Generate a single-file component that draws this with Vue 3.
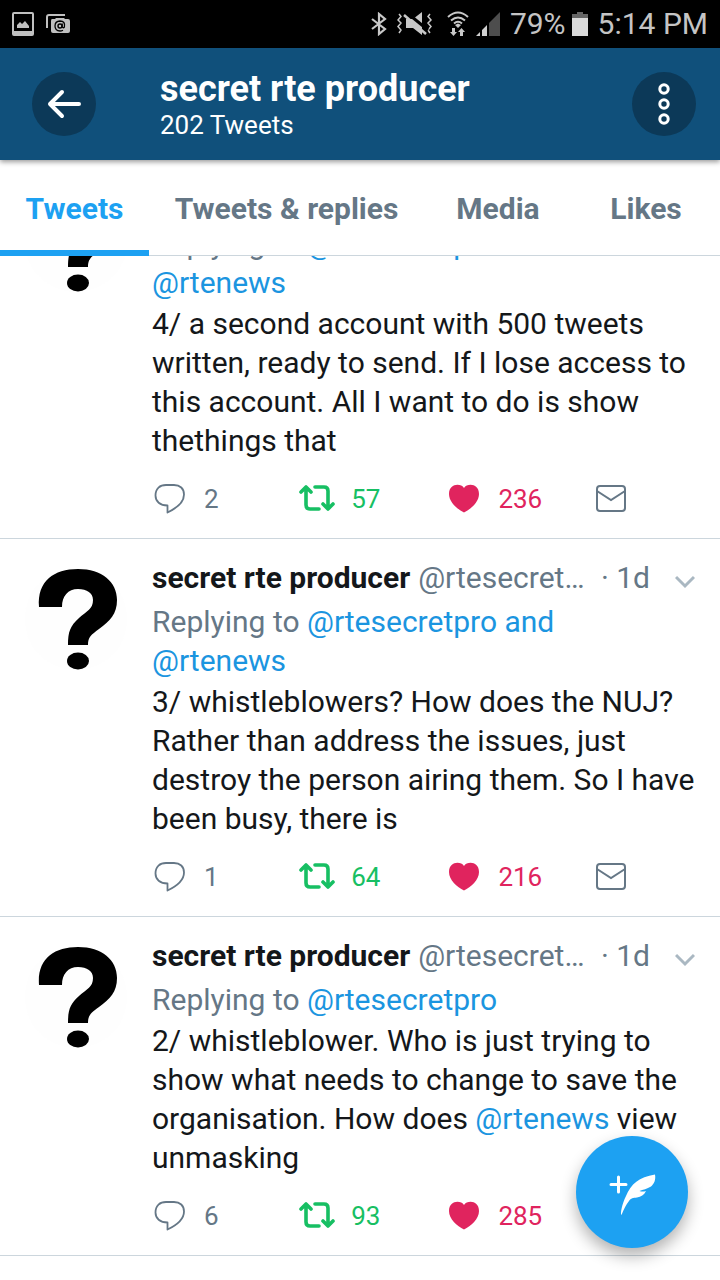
<script setup>
import { ref } from 'vue'

const tabs = ['Tweets', 'Tweets & replies', 'Media', 'Likes']
const active = ref('Tweets')

const tweets = [
  {
    id: 4,
    replying: ['@rtesecretpro and', '@rtenews'],
    text: [{ t: '4/ a second account with 500 tweets written, ready to send. If I lose access to this account. All I want to do is show thethings that' }],
    replies: 2,
    retweets: 57,
    likes: 236,
  },
  {
    id: 3,
    replying: ['@rtesecretpro and', '@rtenews'],
    text: [{ t: '3/ whistleblowers? How does the NUJ? Rather than address the issues, just destroy the person airing them. So I have been busy, there is' }],
    replies: 1,
    retweets: 64,
    likes: 216,
  },
  {
    id: 2,
    replying: ['@rtesecretpro'],
    text: [
      { t: '2/ whistleblower. Who is just trying to show what needs to change to save the organisation. How does ' },
      { t: '@rtenews', link: true },
      { t: ' view unmasking' },
    ],
    replies: 6,
    retweets: 93,
    likes: 285,
  },
]
</script>

<template>
  <div class="screen">
    <div class="status">
      <div class="status-side">
        <svg width="22" height="24" viewBox="0 0 22 24">
          <rect x="1" y="1" width="20" height="22" rx="1" fill="none" stroke="#c0c0c0" stroke-width="2" />
          <path d="M1 19h20v4H1z" fill="#c0c0c0" />
          <path d="M5 16v-3l3-3 2 2 3-3 4 5v2z" fill="#c0c0c0" />
        </svg>
        <svg width="24" height="20" viewBox="0 0 24 20">
          <path d="M1 14V3q0-2 2-2h16" fill="none" stroke="#c0c0c0" stroke-width="2" />
          <path d="M6 5h3l1-1h8l1 1h3q2 0 2 2v10q0 2-2 2H7q-2 0-2-2V7q0-2 1-2z" fill="#c0c0c0" />
          <circle cx="14" cy="12" r="2" fill="none" stroke="#000" stroke-width="1.4" />
          <path d="M16.200 9.500v3.500q1 1.500 2.200 0Q19.500 7 14 7q-5 .3-5 5t5 5q1.500 0 3-.8" fill="none" stroke="#000" stroke-width="1.300" />
        </svg>
      </div>
      <div class="status-side right">
        <svg width="16" height="24" viewBox="0 0 16 24">
          <path d="M1 7l13 10-6 5V2l6 5L1 17" fill="none" stroke="#c8c8c8" stroke-width="2.200" />
        </svg>
        <svg class="mute" width="36" height="24" viewBox="0 0 36 24">
          <path d="M2 2l2 2.500L1 8l3 3-3 3.500L4 18l-2 3M33 2l-2 2.500L34 8l-3 3 3 3.500L31 18l2 3" fill="none" stroke="#c8c8c8" stroke-width="1.500" />
          <path d="M9 7h7l9-7v23l-9-7H9z" fill="#c8c8c8" />
          <path d="M9 0l22 18" stroke="#000" stroke-width="3" />
          <path d="M7 3l22 19" stroke="#c8c8c8" stroke-width="2.500" />
        </svg>
        <svg class="wifi" width="22" height="26" viewBox="0 0 22 26">
          <path d="M1 6Q11-3 21 6M4 9.500q7-6 14 0M7 12.500q4-3.500 8 0" fill="none" stroke="#c8c8c8" stroke-width="2" />
          <path d="M8 14l3-1.500 3 1.500-3 3z" fill="#c8c8c8" />
          <path d="M5 17h3v4h2l-3.500 4L3 21h2zM13 25v-4h-2l3.500-4 3.500 4h-2v4z" fill="#c8c8c8" />
        </svg>
        <svg class="signal" width="24" height="24" viewBox="0 0 24 24">
          <path d="M13 11L24 0v24H13z" fill="#4d4d4d" />
          <path d="M0 24l4-4v4zM6 18l5-5v11H6z" fill="#d0d0d0" />
        </svg>
        <span class="percent">79%</span>
        <svg class="battery" width="16" height="24" viewBox="0 0 16 24">
          <path d="M0 2h5V0h6v2h5v4H0z" fill="#666" />
          <path d="M0 6h16v18H0z" fill="#dadada" />
        </svg>
        <span>5:14 PM</span>
      </div>
    </div>

    <header class="bar">
      <button class="round" aria-label="Back">
        <svg width="36" height="30" viewBox="0 0 36 30">
          <path d="M33 15H4M16 3L4 15l12 12" fill="none" stroke="#fff" stroke-width="4" stroke-linecap="round" stroke-linejoin="round" />
        </svg>
      </button>
      <div class="heading">
        <h1>secret rte producer</h1>
        <p>202 Tweets</p>
      </div>
      <button class="round" aria-label="More options">
        <svg width="12" height="42" viewBox="0 0 12 42">
          <g fill="none" stroke="#fff" stroke-width="3">
            <circle cx="6" cy="6" r="4.200" />
            <circle cx="6" cy="21" r="4.200" />
            <circle cx="6" cy="36" r="4.200" />
          </g>
        </svg>
      </button>
    </header>

    <nav class="tabs">
      <button v-for="t in tabs" :key="t" :class="{ on: t === active }" @click="active = t">{{ t }}</button>
    </nav>

    <main class="viewport">
      <div class="feed">
        <article v-for="w in tweets" :key="w.id" class="tweet">
          <svg class="avatar" width="104" height="108" viewBox="0 0 104 108">
            <circle cx="52" cy="55" r="51" fill="#fefefe" />
            <path d="M15 43C13 17 30 5 54 5C78 5 93 18 93 36C93 50 86 57 75 65C67 71 64 73 64 81H44C44 68 46 62 55 54C63 47 69 45 69 36C69 29 63 25 54 25C44 25 38 32 38 43Z" />
            <ellipse cx="54" cy="97" rx="11" ry="8.500" />
          </svg>
          <div class="content">
            <div class="who">
              <strong>secret rte producer</strong>
              <span class="handle">@rtesecret…</span>
              <span class="age">· 1d</span>
              <button class="caret" aria-label="Tweet options">
                <svg width="20" height="14" viewBox="0 0 20 14">
                  <path d="M1 2l9 9 9-9" fill="none" stroke="#aab8c2" stroke-width="3" />
                </svg>
              </button>
            </div>
            <div class="replying">
              Replying to
              <template v-for="(r, i) in w.replying" :key="r"><br v-if="i" /><a href="#">{{ r }}</a></template>
            </div>
            <p class="text"><template v-for="(s, i) in w.text" :key="i"><a v-if="s.link" href="#">{{ s.t }}</a><template v-else>{{ s.t }}</template></template></p>
            <div class="actions">
              <button class="reply" aria-label="Reply">
                <svg width="36" height="32" viewBox="0 0 36 32">
                  <path d="M15.500 22.500C8 22.500 3.500 18.500 3.500 12.500C3.500 5.500 8 2 14 2h8C28 2 32 5.500 32 11.500C32 20 24 25.500 15.500 29.500V22.500Z" fill="none" stroke="#657786" stroke-width="1.800" stroke-linejoin="round" />
                </svg>
                <span>{{ w.replies }}</span>
              </button>
              <button class="retweet" aria-label="Retweet">
                <svg width="36" height="32" viewBox="0 0 36 32">
                  <path d="M2 9l5-5 5 5M7 5v17q0 4 4 4h9M16 4h9q4 0 4 4v17M24 21l5 5 5-5" fill="none" stroke="#17bf63" stroke-width="3.600" stroke-linecap="round" stroke-linejoin="round" />
                </svg>
                <span>{{ w.retweets }}</span>
              </button>
              <button class="like" aria-label="Like">
                <svg width="36" height="32" viewBox="0 0 36 32">
                  <path d="M18 5C21 0 33 0 33 11C33 19 25 26 18 29.500C11 26 3 19 3 11C3 0 15 0 18 5Z" fill="#e0245e" />
                </svg>
                <span>{{ w.likes }}</span>
              </button>
              <button class="mail" aria-label="Send message">
                <svg width="36" height="32" viewBox="0 0 36 32">
                  <rect x="3" y="3" width="28" height="25" rx="3" fill="none" stroke="#657786" stroke-width="2" />
                  <path d="M3 8l14 9 14-9" fill="none" stroke="#657786" stroke-width="2" />
                </svg>
              </button>
            </div>
          </div>
        </article>
      </div>
    </main>

    <button class="compose" aria-label="Compose Tweet">
      <svg width="48" height="48" viewBox="0 0 48 48">
        <path d="M10.500 9v15M3 16.500h15" stroke="#fff" stroke-width="3" stroke-linecap="round" />
        <path d="M13.500 47C12 46 14 36 18 28C23 16 31 9 47 6.500C48 12 46 16 43 18.500C39 21 35 21.500 31.500 23C34 24 36 23.500 38 23C36 27 33 29 29 29.500C25 30 23 30 21 33Q17 38 13.500 47Z" fill="#fff" />
      </svg>
    </button>
  </div>
</template>

<style>
body {
  background: #fff;
}
</style>

<style scoped>
.screen {
  height: 100vh;
  display: flex;
  flex-direction: column;
  background: #fff;
  color: #14171a;
  font-family: Roboto, "Liberation Sans", sans-serif;
}
button {
  border: 0;
  padding: 0;
  background: none;
  font: inherit;
  color: inherit;
  cursor: pointer;
}
svg {
  display: block;
  flex: none;
}
a {
  color: #1b95e0;
  text-decoration: none;
}
.status {
  flex: none;
  display: flex;
  justify-content: space-between;
  height: 48px;
  padding: 0 12px;
  background: #000;
  color: #c4c4c4;
  font-size: 30px;
  line-height: 48px;
}
.status-side {
  display: flex;
  align-items: center;
  gap: 12px;
}
.right {
  gap: 10px;
}
.wifi {
  margin-left: 4px;
}
.signal {
  margin-left: -3px;
}
.battery {
  margin-left: -4px;
}
.bar {
  flex: none;
  position: relative;
  display: flex;
  align-items: center;
  height: 112px;
  box-sizing: border-box;
  padding: 0 24px 0 32px;
  background: #10507b;
  color: #fff;
  box-shadow: 0 2px 5px rgba(0, 0, 0, 0.4);
}
.round {
  flex: none;
  display: grid;
  place-items: center;
  width: 64px;
  height: 64px;
  border-radius: 50%;
  background: #0c3958;
}
.heading {
  flex: 1;
  margin-left: 64px;
  padding-top: 4px;
}
h1 {
  margin: 0;
  font-size: 36px;
  line-height: 38px;
  font-weight: 700;
}
.heading p {
  margin: 0;
  font-size: 26px;
  line-height: 34px;
}
.tabs {
  flex: none;
  display: flex;
  height: 96px;
  box-sizing: border-box;
  border-bottom: 1px solid #ccd6dd;
}
.tabs button {
  flex: 1 0 auto;
  min-width: 148px;
  height: 96px;
  padding: 6px 24px 0;
  border-bottom: 6px solid transparent;
  color: #657786;
  font-size: 30px;
  font-weight: 700;
}
.tabs .on {
  color: #1da1f2;
  border-color: #1da1f2;
}
.viewport {
  flex: 1;
  min-height: 0;
  overflow: hidden;
}
.feed {
  margin-top: -95px;
}
.tweet {
  display: flex;
  gap: 24px;
  padding: 19px 16px 19px 24px;
  border-bottom: 1px solid #ccd6dd;
  font-size: 30px;
  line-height: 39px;
}
.avatar {
  margin-top: 6px;
}
.content {
  flex: 1;
  min-width: 0;
}
.who {
  display: flex;
  align-items: center;
  color: #657786;
  white-space: nowrap;
}
.who strong {
  color: #14171a;
}
.handle {
  flex: 1;
  margin-left: 8px;
}
.age {
  margin-right: 25px;
}
.caret {
  margin: 8px 9px 0 0;
}
.replying {
  margin-top: 5px;
  color: #657786;
}
.text {
  margin: 2px 0 19px;
}
.actions {
  display: grid;
  grid-template-columns: 4fr 4fr 4fr 3fr;
  height: 40px;
  font-size: 26px;
}
.actions button {
  display: flex;
  align-items: center;
  gap: 16px;
}
.reply {
  color: #657786;
}
.retweet {
  color: #17bf63;
}
.like {
  color: #e0245e;
}
.compose {
  position: fixed;
  right: 32px;
  bottom: 32px;
  display: grid;
  place-items: center;
  width: 112px;
  height: 112px;
  border-radius: 50%;
  background: #1da1f2;
  box-shadow: 0 8px 16px rgba(0, 0, 0, 0.3);
}
</style>
